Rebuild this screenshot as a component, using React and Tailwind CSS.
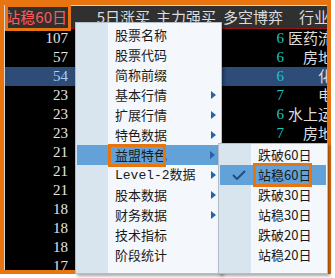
import React from "react";

const CJK = { fontFamily: '"Noto Sans CJK SC", "Noto Sans", sans-serif' };
const NUM = { fontFamily: '"Liberation Serif", "DejaVu Serif", serif' };

const rows = [
  ["107", "6", "医药流通"],
  ["57", "6", "房地产"],
  ["54", "6", "化工"],
  ["23", "7", "电力"],
  ["23", "6", "水上运输"],
  ["23", "7", "房地产"],
  ["21", "6", "银行"],
  ["21", "6", "电子"],
  ["21", "5", "汽车"],
  ["18", "5", "医药"],
  ["18", "5", "建材"],
  ["18", "4", "钢铁"],
  ["17", "4", "煤炭"],
];

const menu = [
  ["股票名称", false],
  ["股票代码", false],
  ["简称前缀", false],
  ["基本行情", true],
  ["扩展行情", true],
  ["特色数据", true],
  ["益盟特色", true],
  ["Level-2数据", true],
  ["股本数据", true],
  ["财务数据", true],
  ["技术指标", false],
  ["阶段统计", false],
];

const sub = ["跌破60日", "站稳60日", "跌破30日", "站稳30日", "跌破20日", "站稳20日"];

function Arrow() {
  return (
    <svg width="5" height="8" viewBox="0 0 5 8" className="block">
      <path d="M0 0 L5 4 L0 8 Z" fill="#2563a8" />
    </svg>
  );
}

export default function App() {
  return (
    <div className="w-[335px] h-[278px] bg-white relative overflow-hidden" style={CJK}>
      <div className="w-[331px] h-[274px] border-[#e8740f] border-t-[5px] border-l-4 border-r-4 border-b-4 bg-black overflow-hidden">
        <div className="h-full border-t border-l border-[#d8d8d8] overflow-hidden">
          {/* header */}
          <div className="flex h-[23px] items-center bg-[#303030] border-b border-[#9a1212] text-[15px] text-[#dcdcdc] whitespace-nowrap">
            <div className="w-[65px] flex-none text-right pr-[3px] text-[#ff5a5a]">站稳60日</div>
            <div className="w-[82px] flex-none text-right pr-[2px]">5日涨买</div>
            <div className="w-[66px] flex-none text-right pr-[2px]">主力强买</div>
            <div className="w-[67px] flex-none text-right pr-[2px]">多空博弈</div>
            <div className="w-[65px] flex-none pl-[14px]">行业</div>
          </div>
          {/* rows */}
          {rows.map((r, i) => (
            <div
              key={i}
              className={
                "flex h-[19px] items-center whitespace-nowrap text-[15px] " +
                (i === 2 ? "bg-[#2d4c78] text-[#a9cdf5]" : "text-[#e4e4e4]")
              }
            >
              <div className="w-[65px] flex-none text-right pr-[2px]" style={NUM}>{r[0]}</div>
              <div className="w-[82px] flex-none" />
              <div className="w-[66px] flex-none" />
              <div className="w-[67px] flex-none text-right pr-[1px] text-[#1cc4c4]" style={NUM}>{r[1]}</div>
              <div className="w-[63px] flex-none text-right text-[#dcdcdc]">{r[2]}</div>
            </div>
          ))}
        </div>
      </div>

      {/* header annotation box */}
      <div className="absolute left-[5px] top-[4px] w-[66px] h-[27px] border-[3px] border-[#e8740f]" />

      {/* main context menu */}
      <div className="absolute left-[75px] top-[22px] w-[147px] h-[252px] bg-[#f4f7fb] border border-[#b4bec8] shadow-[2px_2px_3px_rgba(0,0,0,0.35)]">
        <div className="absolute left-0 top-0 bottom-0 w-[32px] bg-[#d9e5ee]" />
        <div className="relative flex flex-col pt-[2px]">
          {menu.map(([t, arrow], i) => (
            <div
              key={i}
              className={
                "flex h-[20px] items-center text-[13px] text-[#1a1a1a] " +
                (i === 6 ? "bg-[#62a2d8] mx-[1px]" : "")
              }
            >
              <div className={i === 6 ? "w-[38px] flex-none" : "w-[39px] flex-none"} />
              <div className="flex-1 whitespace-nowrap" style={t.startsWith("Level") ? { fontFamily: '"Liberation Mono", "Noto Sans CJK SC", monospace' } : undefined}>
                {t.startsWith("Level") ? (
                  <>
                    <span>Level-2</span>
                    <span style={CJK}>数据</span>
                  </>
                ) : (
                  t
                )}
              </div>
              <div className="w-[16px] flex-none flex justify-center">{arrow ? <Arrow /> : null}</div>
            </div>
          ))}
        </div>
      </div>

      {/* 益盟特色 annotation */}
      <div className="absolute left-[108px] top-[144px] w-[58px] h-[23px] border-[3px] border-[#e8740f]" />

      {/* sub menu */}
      <div className="absolute left-[218px] top-[143px] w-[110px] h-[131px] bg-[#f4f7fb] border border-[#b4bec8] shadow-[2px_2px_3px_rgba(0,0,0,0.35)]">
        <div className="absolute left-0 top-0 bottom-0 w-[32px] bg-[#d9e5ee]" />
        <div className="relative flex flex-col pt-[1px]">
          {sub.map((t, i) => (
            <div
              key={i}
              className={
                "flex h-[20px] items-center text-[13px] text-[#1a1a1a] " +
                (i === 1 ? "bg-[#62a2d8] mx-[1px]" : "")
              }
            >
              <div className={(i === 1 ? "w-[38px]" : "w-[39px]") + " flex-none flex justify-center"}>
                {i === 1 ? (
                  <svg width="14" height="10" viewBox="0 0 14 10">
                    <path d="M1 5 L5 9 L13 1" fill="none" stroke="#1f4f86" strokeWidth="2" />
                  </svg>
                ) : null}
              </div>
              <div className="whitespace-nowrap">{t}</div>
            </div>
          ))}
        </div>
      </div>

      {/* 站稳60日 sub annotation */}
      <div className="absolute left-[253px] top-[163px] w-[59px] h-[24px] border-[3px] border-[#e8740f]" />
    </div>
  );
}
